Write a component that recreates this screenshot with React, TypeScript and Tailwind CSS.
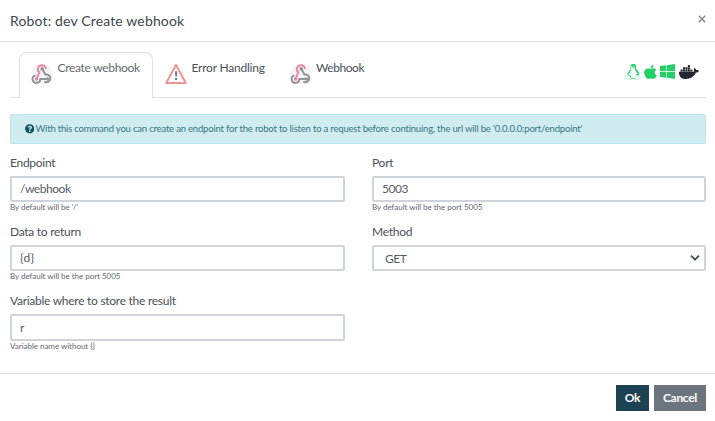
import type { ReactNode } from "react";
import { FaApple, FaDocker, FaLinux, FaQuestionCircle, FaWindows } from "react-icons/fa";

function WebhookIcon() {
  return (
    <svg viewBox="0 0 22 22" className="size-[22px] shrink-0" fill="none" strokeLinecap="round">
      <circle cx="11" cy="11" r="10.5" fill="#f5f5f6" />
      <path d="M3.6 12.6A3.9 3.9 0 1 0 9.4 16H16.2" stroke="#949596" strokeWidth="2" />
      <path d="M11.3 5.8L14.4 11.6A3.9 3.9 0 1 1 14 19" stroke="#949596" strokeWidth="2" />
      <path d="M7.4 8.4A4.1 4.1 0 1 1 14.9 5.3" stroke="#e887a8" strokeWidth="2" />
      <path d="M8.5 8.9L5.7 15.6" stroke="#e887a8" strokeWidth="2" />
      <circle cx="5.6" cy="16" r="1.8" fill="#e887a8" />
      <circle cx="11.2" cy="5.9" r="1.8" fill="#949596" />
      <circle cx="16.6" cy="16" r="1.8" fill="#949596" />
    </svg>
  );
}

function ErrorIcon() {
  return (
    <svg viewBox="0 0 22 22" className="size-[22px] shrink-0">
      <path d="M11 1.9L20.8 20H1.2Z" fill="white" stroke="#f29494" strokeWidth="2" strokeLinejoin="round" />
      <path d="M9.9 8.2h2.4l-.5 5.6h-1.4z" fill="#7b7f84" />
      <circle cx="11.1" cy="16" r="1.2" fill="#7b7f84" />
    </svg>
  );
}

function Field({ label, hint, children }: { label: ReactNode; hint?: ReactNode; children: ReactNode }) {
  return (
    <div className="h-[69px]">
      <label className="block h-[21px] text-[12px] leading-[16px] tracking-[-0.27px] text-[#4b5157]">{label}</label>
      {children}
      {hint && <div className="h-[12px] text-[8px] leading-[11px] tracking-[-0.03px] text-[#5f666d]">{hint}</div>}
    </div>
  );
}

const control =
  "flex h-[26px] items-center rounded-[2px] border-2 border-[#ced4da] bg-white pl-[8px] text-[12px] tracking-[-0.45px] text-[#565d64]";

export default function App() {
  return (
    <div className="flex h-[421px] w-[715px] flex-col bg-white font-['Lato','Open_Sans',sans-serif] whitespace-nowrap text-[#4b5157]">
      <header className="flex h-[42px] items-center justify-between border-b border-[#dee2e6] pr-[9px] pl-[10px]">
        <h1 className="text-[14px] leading-5 tracking-[0.15px] text-[#40464c]">Robot: dev Create webhook</h1>
        <button className="mb-[3px] flex size-[8px] items-center justify-center" aria-label="Close">
          <svg viewBox="0 0 8 8" className="size-[8px]" stroke="#808080" strokeWidth="1.3">
            <path d="M.8.8l6.4 6.4M7.2.8L.8 7.2" />
          </svg>
        </button>
      </header>

      <main className="h-[331px] pr-[9px] pl-[10px]">
        <nav className="flex h-[56px] items-end border-b border-[#dee2e6] pl-[9px] text-[12px] leading-[12px]">
          <div className="-mb-px flex h-[46px] w-[134px] rounded-t-[8px] border border-b-0 border-[#dee2e6] bg-white pt-[9px] pl-[11px]">
            <div className="pt-px">
              <WebhookIcon />
            </div>
            <span className="ml-[4.5px] tracking-[-0.3px] text-[#636a71]">Create webhook</span>
          </div>
          <div className="flex h-[46px] w-[125px] pt-[11px] pl-[12px]">
            <div className="pt-px">
              <ErrorIcon />
            </div>
            <span className="ml-[4.5px] tracking-[-0.22px]">Error Handling</span>
          </div>
          <div className="flex h-[46px] pt-[11px] pl-[12px]">
            <div className="pt-px">
              <WebhookIcon />
            </div>
            <span className="ml-[4px] tracking-[-0.45px]">Webhook</span>
          </div>
          <div className="mr-[7px] mb-[17px] ml-auto flex items-center text-[#25cf69]">
            <FaLinux preserveAspectRatio="none" className="mr-[3px] h-[16px] w-[16px]" />
            <FaApple preserveAspectRatio="none" className="mr-[3px] h-[16px] w-[13px]" />
            <FaWindows preserveAspectRatio="none" className="mr-[4px] h-[17px] w-[15px]" />
            <FaDocker className="h-[16px] w-[20px] text-[#21262f]" />
          </div>
        </nav>

        <div className="mt-[16px] flex h-[30px] items-center rounded-[2px] border border-[#bee5eb] bg-[#d1ecf1] pl-[13.5px] text-[#357681]">
          <FaQuestionCircle className="mr-[1.5px] size-[9.5px] text-[#0c5460]" />
          <span className="text-[9.5px] leading-3 tracking-[-0.19px]">
            With this command you can create an endpoint for the robot to listen to a request before continuing, the url will be '0.0.0.0:port/endpoint'
          </span>
        </div>

        <div className="mt-[11px] grid grid-cols-[335px_334px] gap-x-[27px]">
          <Field label="Endpoint" hint="By default will be '/'">
            <div className={control}>/webhook</div>
          </Field>
          <Field label="Port" hint="By default will be the port 5005">
            <div className={control}>5003</div>
          </Field>
          <Field label="Data to return" hint="By default will be the port 5005">
            <div className={control}>
              <span className="tracking-[0.2px]">{"{d}"}</span>
            </div>
          </Field>
          <Field label="Method">
            <div className={control + " justify-between pr-[4px]"}>
              <span className="pt-[2px] pl-[3px]">GET</span>
              <svg viewBox="0 0 10 8" className="h-[8px] w-[10px]" fill="none" stroke="#495057" strokeWidth="2">
                <path d="M1 1.6l4 4 4-4" />
              </svg>
            </div>
          </Field>
          <Field label="Variable where to store the result" hint="Variable name without {}">
            <div className={control + " min-h-[27px] pt-px"}>r</div>
          </Field>
        </div>
      </main>

      <footer className="flex h-[48px] justify-end gap-[5px] border-t border-[#dee2e6] pt-[11px] pr-[9px] text-[12px] font-bold tracking-[-0.3px] text-white">
        <button className="h-[26px] w-[33px] bg-[#1c4254]">Ok</button>
        <button className="h-[26px] w-[52px] bg-[#6c757d]">Cancel</button>
      </footer>
    </div>
  );
}
